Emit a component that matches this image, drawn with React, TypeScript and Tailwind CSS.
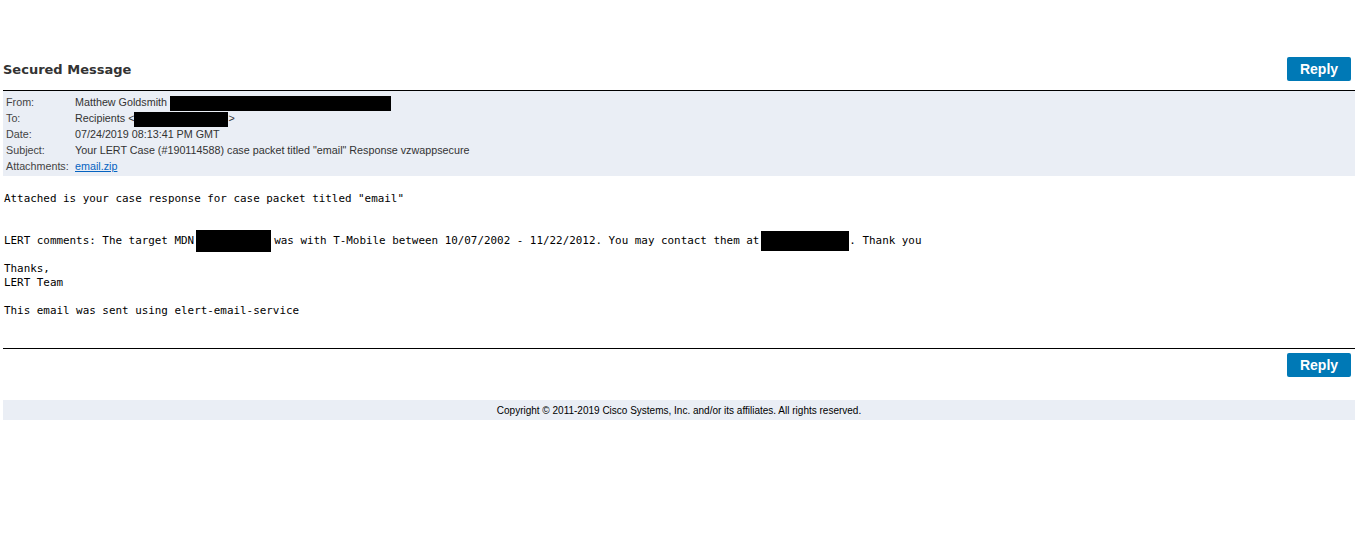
import React from 'react';

const headerRows = [
  { label: 'From:', value: <>Matthew Goldsmith <span className="inline-block align-middle w-[221px] h-[15px] -my-[2px] bg-black" /></> },
  { label: 'To:', value: <>Recipients &lt;<span className="inline-block align-middle w-[94px] h-[15px] -my-[2px] bg-black" />&gt;</> },
  { label: 'Date:', value: '07/24/2019 08:13:41 PM GMT' },
  { label: 'Subject:', value: 'Your LERT Case (#190114588) case packet titled "email" Response vzwappsecure' },
  { label: 'Attachments:', value: <a href="#" className="text-[#0563c1] underline">email.zip</a> },
];

const ReplyButton = () => (
  <button className="w-[64px] h-[24px] rounded-[2px] bg-[#0079b6] text-white text-[14px] font-semibold font-['Liberation_Sans',Arial,sans-serif]">
    Reply
  </button>
);

export default function App() {
  return (
    <div className="bg-white min-h-[535px] pl-[3px] pr-[1px] text-[#333]">
      <div className="flex items-center justify-between pt-[57px] pb-[9px] pr-[4px]">
        <h1 className="font-['DejaVu_Sans',Verdana,sans-serif] font-bold text-[13px] leading-[18px] pt-[2px] text-[#333]">Secured Message</h1>
        <ReplyButton />
      </div>
      <div className="border-t border-black" />
      <div className="bg-[#eaeef5] pt-[3px] pb-[2px] font-['Liberation_Sans',Arial,sans-serif] text-[10.75px]">
        {headerRows.map((row) => (
          <div key={row.label} className="flex h-[16px] items-center">
            <div className="w-[72px] pl-[3px] text-[#444]">{row.label}</div>
            <div className="text-[#333]">{row.value}</div>
          </div>
        ))}
      </div>
      <div className="mt-[16px] pl-[1px] font-['DejaVu_Sans_Mono','Liberation_Mono',monospace] text-[10.9px] leading-[14px] text-black whitespace-pre">
        <div>Attached is your case response for case packet titled "email"</div>
        <div>&nbsp;</div>
        <div>&nbsp;</div>
        <div>
          LERT comments: The target MDN<span className="inline-block align-middle w-[75px] h-[22px] -my-[5px] ml-[2px] mr-[3px] bg-black" />was with T-Mobile between 10/07/2002 - 11/22/2012. You may contact them at<span className="inline-block align-middle w-[88px] h-[20px] -my-[4px] ml-[2px] bg-black" />. Thank you
        </div>
        <div>&nbsp;</div>
        <div>Thanks,</div>
        <div>LERT Team</div>
        <div>&nbsp;</div>
        <div>This email was sent using elert-email-service</div>
      </div>
      <div className="mt-[30px] border-t border-black" />
      <div className="flex justify-end pt-[4px] pr-[4px]">
        <ReplyButton />
      </div>
      <div className="mt-[23px] h-[20px] bg-[#eaeef5] flex items-center justify-center font-['Liberation_Sans',Arial,sans-serif] text-[10px] text-black">
        Copyright © 2011-2019 Cisco Systems, Inc. and/or its affiliates. All rights reserved.
      </div>
    </div>
  );
}
